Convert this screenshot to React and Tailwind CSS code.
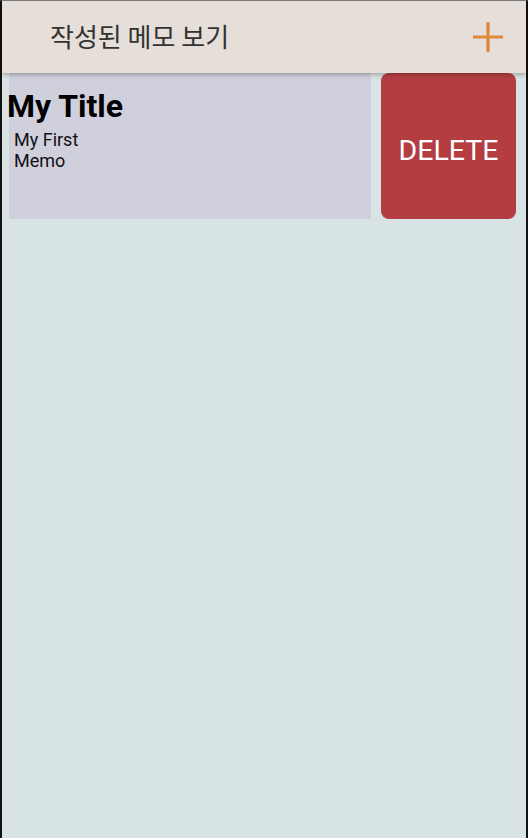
import React from 'react';

const memos = [{ id: 1, title: 'My Title', body: 'My First Memo' }];

const PlusIcon = () => (
  <svg width="32" height="32" viewBox="0 0 32 32" fill="none">
    <path d="M16 1v30M1 16h30" stroke="#e0883a" strokeWidth="3.2" />
  </svg>
);

const MemoRow = ({ title, body }) => (
  <div className="flex h-[146px] pl-[7px] pr-[10px] gap-[10px]">
    <div className="flex-1 bg-[#d0cfdc] flex flex-col">
      <h2 className="-ml-[2px] mt-[15px] text-[32px] leading-[36px] font-bold text-black">{title}</h2>
      <p className="ml-[5px] mt-[5px] max-w-[80px] text-[18px] leading-[21px] text-[#111]">{body}</p>
    </div>
    <button className="w-[135px] rounded-[8px] bg-[#b33d41] text-white text-[28.5px] pt-[10px] flex items-center justify-center">
      DELETE
    </button>
  </div>
);

export default function App() {
  return (
    <div
      className="h-[838px] w-[528px] border-t border-t-[#7c7c7c] border-x-2 border-x-[#111] bg-[#d8e3e4] flex flex-col"
      style={{ fontFamily: 'Roboto, "Noto Sans CJK KR", sans-serif' }}
    >
      <header className="h-[72px] shrink-0 bg-[#e6dfd9] flex items-center justify-between pl-[48px] pr-[22px] shadow-[0_2px_4px_rgba(0,0,0,0.25)] relative z-10">
        <h1 className="-mt-[3px] text-[26px] text-[#333]" style={{ fontFamily: '"Noto Sans CJK KR", Roboto, sans-serif' }}>
          작성된 메모 보기
        </h1>
        <PlusIcon />
      </header>
      <main className="flex flex-col">
        {memos.map((m) => (
          <MemoRow key={m.id} title={m.title} body={m.body} />
        ))}
      </main>
    </div>
  );
}
